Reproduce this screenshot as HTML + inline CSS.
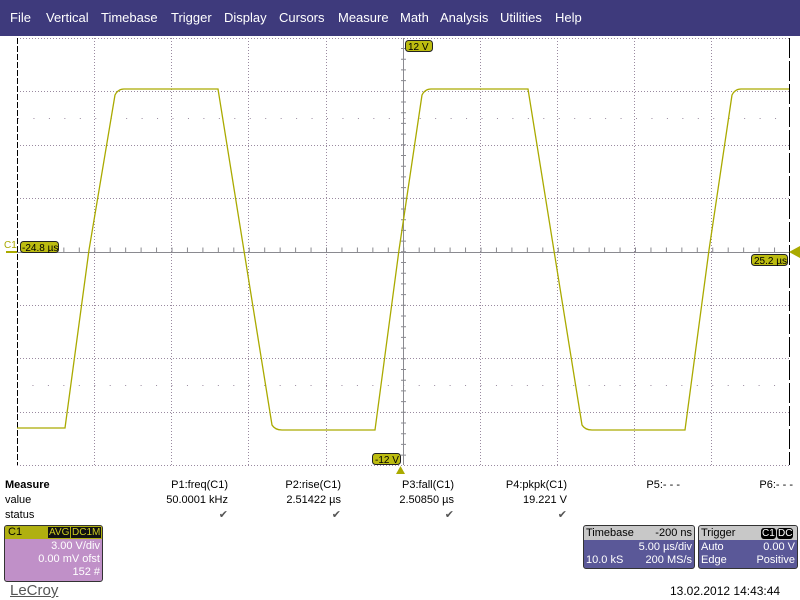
<!DOCTYPE html>
<html><head><meta charset="utf-8"><style>
body{margin:0;width:800px;height:600px;background:#fff;overflow:hidden;position:relative;font-family:"Liberation Sans",sans-serif;}
#menu{position:absolute;left:0;top:0;width:800px;height:36px;background:#3e3a7c;color:#fff;font-size:13px;}
#menu span{position:absolute;top:10px;}
.t{position:absolute;font-size:11px;color:#000;white-space:nowrap;}
.r{text-align:right;}
.box{position:absolute;border:1px solid #333;border-radius:3px;font-size:11px;overflow:hidden}
.box div{position:absolute;white-space:nowrap;}
</style></head><body>
<div id="menu">
<span style="left:10px">File</span><span style="left:46px">Vertical</span><span style="left:101px">Timebase</span><span style="left:171px">Trigger</span><span style="left:224px">Display</span><span style="left:279px">Cursors</span><span style="left:338px">Measure</span><span style="left:400px">Math</span><span style="left:440px">Analysis</span><span style="left:500px">Utilities</span><span style="left:555px">Help</span>
</div>
<svg width="800" height="480" style="position:absolute;left:0;top:0" xmlns="http://www.w3.org/2000/svg">
<g stroke="#9a8aa0" stroke-width="1" stroke-dasharray="1,2">
<line x1="94.5" y1="38" x2="94.5" y2="465"/><line x1="171.5" y1="38" x2="171.5" y2="465"/><line x1="248.5" y1="38" x2="248.5" y2="465"/><line x1="326.5" y1="38" x2="326.5" y2="465"/><line x1="480.5" y1="38" x2="480.5" y2="465"/><line x1="557.5" y1="38" x2="557.5" y2="465"/><line x1="634.5" y1="38" x2="634.5" y2="465"/><line x1="711.5" y1="38" x2="711.5" y2="465"/>
<line x1="17" y1="38.5" x2="789" y2="38.5"/><line x1="17" y1="91.5" x2="789" y2="91.5"/><line x1="17" y1="145.5" x2="789" y2="145.5"/><line x1="17" y1="198.5" x2="789" y2="198.5"/><line x1="17" y1="305.5" x2="789" y2="305.5"/><line x1="17" y1="358.5" x2="789" y2="358.5"/><line x1="17" y1="412.5" x2="789" y2="412.5"/><line x1="17" y1="465.5" x2="789" y2="465.5"/>
</g>
<g stroke="#9a8aa0" stroke-width="1" stroke-dasharray="1,14.45">
<line x1="17" y1="118.5" x2="789" y2="118.5" stroke-dashoffset="-1"/><line x1="17" y1="385.5" x2="789" y2="385.5"/>
</g>
<g stroke="#8a8a90"><line x1="403.5" y1="38" x2="403.5" y2="465"/><line x1="17" y1="252.5" x2="789" y2="252.5"/></g>
<g stroke="#8a8a90" stroke-width="1" stroke-dasharray="1,14.45">
<line x1="17" y1="250" x2="789" y2="250" stroke-width="5"/>
</g>
<g stroke="#8a8a90" stroke-width="5" stroke-dasharray="1,9.7">
<line x1="403.5" y1="48" x2="403.5" y2="465"/>
</g>
<line x1="17.5" y1="38" x2="17.5" y2="465" stroke="#000" stroke-dasharray="6,2"/>
<line x1="789.5" y1="38" x2="789.5" y2="465" stroke="#000" stroke-dasharray="20,3"/>
<path d="M17 428 L65 428 L89 250 L115 95 Q118 89 124 89 L218 89 L272 425 Q275 430 282 430 L375 430 L399 250 L422 95 Q425 89 431 89 L528 89 L582 425 Q585 430 592 430 L685 430 L709 250 L732 95 Q735 89 741 89 L789 89" fill="none" stroke="#aaaa00" stroke-width="1.3"/>
<path d="M6 252 h11" stroke="#aaaa00" stroke-width="2"/>
<path d="M789 252 L800 246 L800 258 Z" fill="#aaaa00"/>
<path d="M400.5 466 L396 474 L405 474 Z" fill="#aaaa00"/>
<g fill="#bcbc10" stroke="#222">
<rect x="20.5" y="241.5" width="38" height="11" rx="3"/>
<rect x="405.5" y="40.5" width="27" height="11" rx="3"/>
<rect x="372.5" y="453.5" width="28" height="11" rx="3"/>
<rect x="751.5" y="254.5" width="36" height="11" rx="3"/>
</g>
<g font-family="Liberation Sans" font-size="10" fill="#000">
<text x="22" y="251">-24.8 µs</text><text x="408" y="50">12 V</text><text x="375" y="463">-12 V</text><text x="754" y="264">25.2 µs</text>
</g>
<text x="4" y="248" font-family="Liberation Sans" font-size="10" fill="#aaaa00">C1</text>
</svg>
<div class="t" style="left:5px;top:479px;font-weight:bold">Measure</div>
<div class="t" style="left:5px;top:494px">value</div>
<div class="t" style="left:5px;top:509px">status</div>
<div class="t r" style="left:130px;top:479px;width:98px">P1:freq(C1)</div>
<div class="t r" style="left:130px;top:494px;width:98px">50.0001 kHz</div>
<div class="t r" style="left:130px;top:508px;width:98px;color:#555">✔</div>
<div class="t r" style="left:243px;top:479px;width:98px">P2:rise(C1)</div>
<div class="t r" style="left:243px;top:494px;width:98px">2.51422 µs</div>
<div class="t r" style="left:243px;top:508px;width:98px;color:#555">✔</div>
<div class="t r" style="left:356px;top:479px;width:98px">P3:fall(C1)</div>
<div class="t r" style="left:356px;top:494px;width:98px">2.50850 µs</div>
<div class="t r" style="left:356px;top:508px;width:98px;color:#555">✔</div>
<div class="t r" style="left:469px;top:479px;width:98px">P4:pkpk(C1)</div>
<div class="t r" style="left:469px;top:494px;width:98px">19.221 V</div>
<div class="t r" style="left:469px;top:508px;width:98px;color:#555">✔</div>
<div class="t r" style="left:582px;top:479px;width:98px">P5:- - -</div>
<div class="t r" style="left:695px;top:479px;width:98px">P6:- - -</div>
<div class="box" style="left:4px;top:525px;width:97px;height:55px;background:#c090c8;color:#fff">
<div style="left:0;top:0;width:97px;height:13px;background:#b0b010"></div>
<div style="left:3px;top:0;color:#000">C1</div>
<div style="left:43px;top:1px;background:#111;color:#cccc20;font-size:10px;padding:0 1px">AVG</div>
<div style="left:66px;top:1px;background:#111;color:#cccc20;font-size:10px;padding:0 1px">DC1M</div>
<div style="right:2px;top:14px">3.00 V/div</div>
<div style="right:2px;top:27px">0.00 mV ofst</div>
<div style="right:2px;top:40px">152 #</div>
</div>
<div class="box" style="left:583px;top:525px;width:110px;height:42px;background:#5a5898;color:#fff">
<div style="left:0;top:0;width:110px;height:14px;background:#c8c8c8"></div>
<div style="left:2px;top:1px;color:#000">Timebase</div><div style="right:2px;top:1px;color:#000">-200 ns</div>
<div style="right:2px;top:15px">5.00 µs/div</div>
<div style="left:2px;top:28px">10.0 kS</div><div style="right:2px;top:28px">200 MS/s</div>
</div>
<div class="box" style="left:698px;top:525px;width:98px;height:42px;background:#5a5898;color:#fff">
<div style="left:0;top:0;width:98px;height:14px;background:#c8c8c8"></div>
<div style="left:2px;top:1px;color:#000">Trigger</div>
<div style="left:62px;top:2px;background:#000;color:#fff;font-size:10px;border-radius:3px;padding:0 1px">C1</div>
<div style="left:78px;top:2px;background:#000;color:#fff;font-size:10px;border-radius:3px;padding:0 1px">DC</div>
<div style="left:2px;top:15px">Auto</div><div style="right:2px;top:15px">0.00 V</div>
<div style="left:2px;top:28px">Edge</div><div style="right:2px;top:28px">Positive</div>
</div>
<div class="t" style="left:10px;top:582px;font-size:15px;color:#555;text-decoration:underline">LeCroy</div>
<div class="t" style="left:670px;top:584px;font-size:12px">13.02.2012 14:43:44</div>
</body></html>
